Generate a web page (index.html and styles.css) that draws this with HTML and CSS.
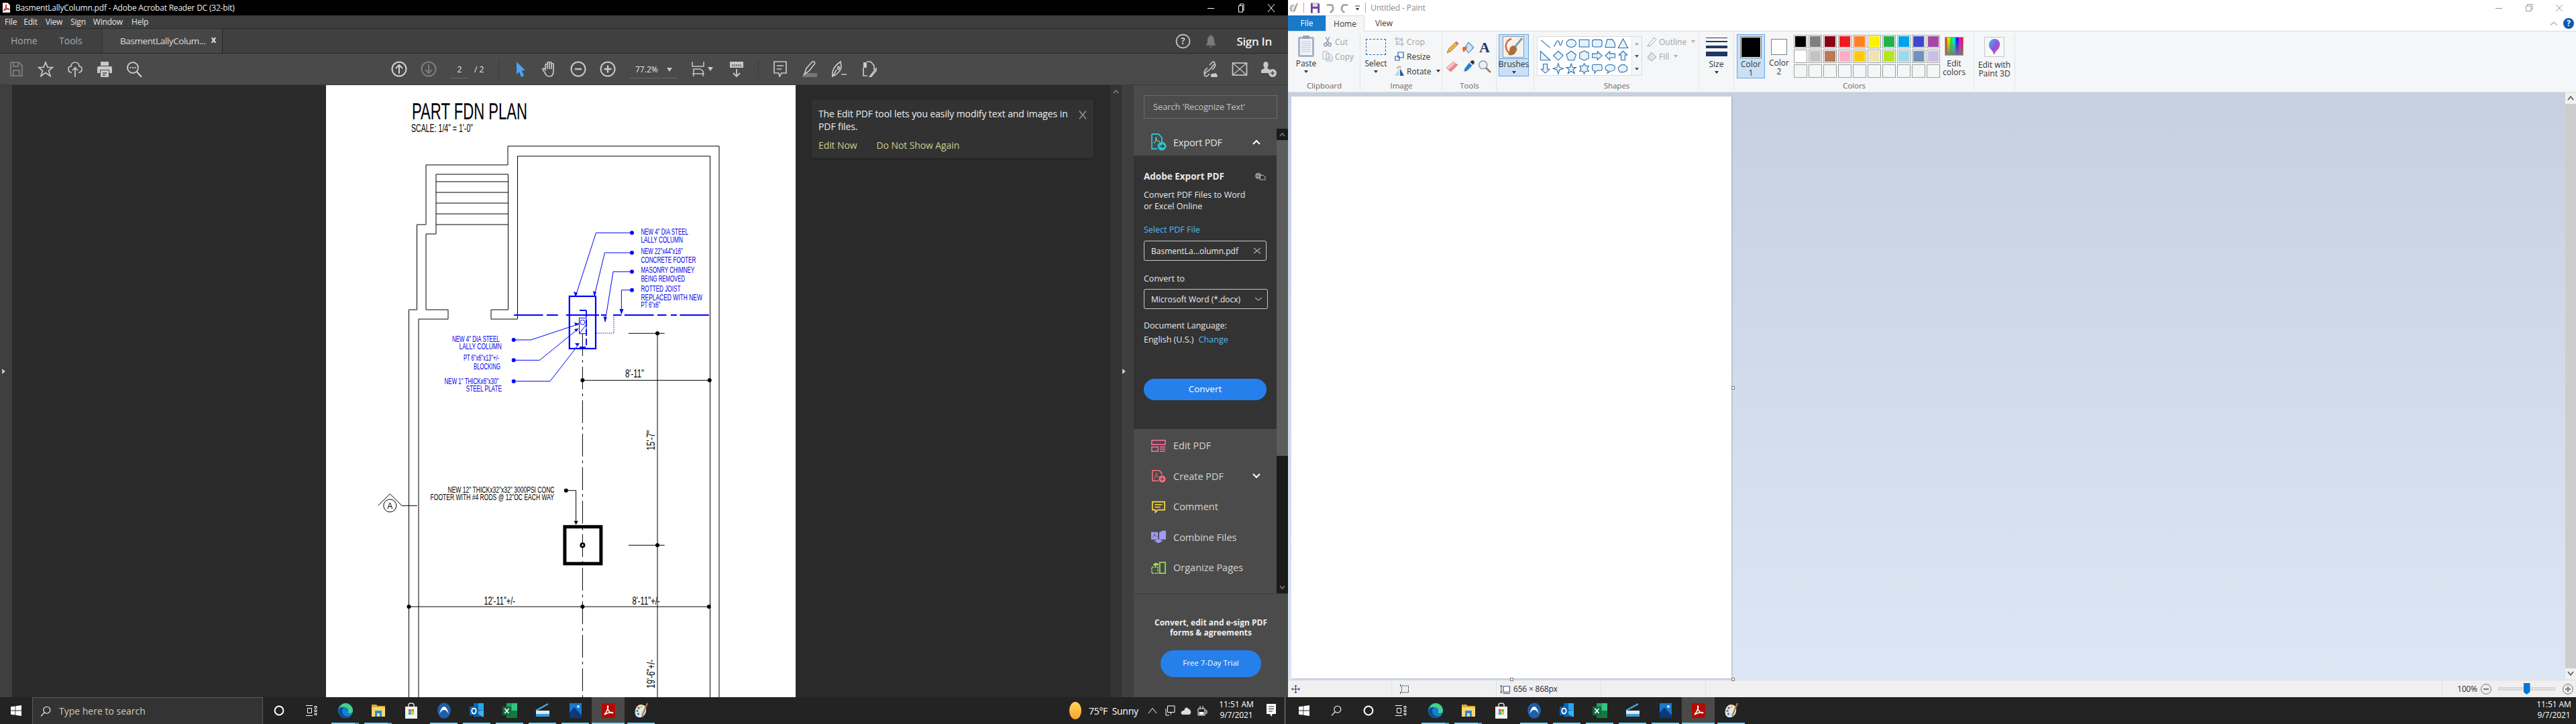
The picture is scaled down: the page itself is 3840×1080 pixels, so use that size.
FILE: index.html
```html
<!DOCTYPE html>
<html lang="en">
<head>
<meta charset="utf-8">
<title>Acrobat and Paint</title>
<link rel="stylesheet" href="styles.css">
</head>
<body>
<svg class="defs" aria-hidden="true">
  <symbol id="i-start" viewBox="0 0 16 16"><path fill="#fff" d="M0 2.3 6.6 1.4V7.6H0ZM7.4 1.3 16 0V7.6H7.4ZM0 8.4H6.6V14.6L0 13.7ZM7.4 8.4H16V16L7.4 14.7Z"/></symbol>
  <symbol id="i-search" viewBox="0 0 16 16"><circle cx="9.8" cy="6.2" r="5" fill="none" stroke="#fff" stroke-width="1.1"/><path d="M6.2 9.8 1 15.4" stroke="#fff" stroke-width="1.2"/></symbol>
  <symbol id="i-cortana" viewBox="0 0 16 16"><circle cx="8" cy="8" r="6.4" fill="none" stroke="#fff" stroke-width="2"/></symbol>
  <symbol id="i-taskview" viewBox="0 0 18 16"><path fill="none" stroke="#fff" d="M1 .5H11M1 15.5H11M3.5 4.5H9.5V11.5H3.5ZM14 1.5H17V4.5H14ZM14 7H17V9.5H14ZM14 12H17V14.5H14Z"/></symbol>
  <symbol id="i-edge" viewBox="0 0 24 24"><circle cx="12" cy="12" r="11" fill="#1480d0"/><path fill="#45d08c" d="M3 8C5 3 9 1 12 1 18 1 23 6 23 12 23 16 18 17 15.5 15 18 11 15 7 11 7 7 7 4 7 3 8Z"/><path fill="#0b4a8e" d="M2 14C2 9 6 6 10 7 6 9 6 16 10 19 13 21 16 21 19 20 13 25 4 22 2 14Z"/></symbol>
  <symbol id="i-folder" viewBox="0 0 24 24"><path fill="#e0a82c" d="M2 3H9L11 5H22V21H2Z"/><path fill="#f8d775" d="M2 7H22V21H2Z"/><path fill="#2a8ad8" d="M7 12H17V21H14V16H10V21H7Z"/></symbol>
  <symbol id="i-store" viewBox="0 0 24 24"><path fill="none" stroke="#ddd" stroke-width="1.5" d="M8 7V3.5C8 2 9 1 12 1S16 2 16 3.5V7"/><rect x="3" y="6" width="18" height="18" fill="#f2f2f2"/><rect x="8" y="10" width="3.7" height="3.7" fill="#f25022"/><rect x="12.3" y="10" width="3.7" height="3.7" fill="#7fba00"/><rect x="8" y="14.3" width="3.7" height="3.7" fill="#00a4ef"/><rect x="12.3" y="14.3" width="3.7" height="3.7" fill="#ffb900"/></symbol>
  <symbol id="i-circle" viewBox="0 0 24 24"><ellipse cx="12" cy="12" rx="10" ry="11.5" fill="#1d5fa8"/><path fill="#fff" d="M5 17C7 9 10 6 12 6S17 9 19 17C16 12 14 11 12 11S8 12 5 17Z"/></symbol>
  <symbol id="i-outlook" viewBox="0 0 24 24"><rect x="7" y="1" width="15" height="20" fill="#0a65b8"/><rect x="14" y="1" width="8" height="10" fill="#28a8ea"/><path fill="#50d9ff" d="M9 14 22 22V11Z" opacity=".7"/><rect x="1" y="6" width="13" height="13" fill="#0f5fa8"/><ellipse cx="7.5" cy="12.5" rx="3.2" ry="4" fill="none" stroke="#fff" stroke-width="1.8"/></symbol>
  <symbol id="i-excel" viewBox="0 0 24 24"><rect x="7" y="1" width="16" height="22" fill="#21a366"/><rect x="15" y="1" width="8" height="11" fill="#33c481"/><rect x="7" y="12" width="16" height="11" fill="#107c41"/><rect x="1" y="6" width="13" height="13" fill="#0e6b38"/><path stroke="#fff" stroke-width="1.8" d="M4.5 9 10.5 16M10.5 9 4.5 16"/></symbol>
  <symbol id="i-scan" viewBox="0 0 24 24"><path stroke="#45a8e0" stroke-width="2.5" d="M2 12 20 2"/><rect x="2" y="12" width="20" height="5" fill="#d8ecf8"/><rect x="2" y="17" width="20" height="4" fill="#3a9bd8"/></symbol>
  <symbol id="i-photos" viewBox="0 0 24 24"><rect x="3" y="1" width="18" height="22" fill="#1b78c8"/><path fill="#0a3a7a" d="M3 23V15L10 7 21 19V23Z"/><circle cx="16" cy="6" r="2" fill="#cfe8ff"/></symbol>
  <symbol id="i-acrobat" viewBox="0 0 24 24"><rect x="2" y="1" width="20" height="22" rx="2.5" fill="#b30b00"/><path fill="none" stroke="#fff" stroke-width="1.6" d="M6 18C9 14 12 8 11.4 5.4 11 3.8 10 6.5 11.5 10.5 13 14 15.5 15.6 18 15.6 19.6 15.6 18 14.2 15 14.8 12 15.3 8 16.6 6 18Z"/></symbol>
  <symbol id="i-paint" viewBox="0 0 24 24"><path fill="#dfe8ee" d="M11 3C17 3 20 7 19 13 18 19 13 23 8 22 3 21 2 16 3 11 4 7 7 3 11 3Z"/><circle cx="8" cy="8" r="1.7" fill="#e84040"/><circle cx="12" cy="6.5" r="1.7" fill="#f0c020"/><circle cx="6" cy="12.5" r="1.7" fill="#30a850"/><circle cx="7.5" cy="17" r="1.7" fill="#3080e0"/><path stroke="#b07a3c" stroke-width="2.2" d="M21 1 13 20"/></symbol>
</svg>

<div class="screen">
  <!-- ============== ACROBAT ============== -->
  <section class="acro">
    <header class="a-title">
      <svg class="a-title-ic" viewBox="0 0 12 16"><path fill="#fff" d="M0 0H8L12 4V16H0Z"/><path fill="none" stroke="#d2161e" stroke-width="1.5" d="M1.5 13C4 10 6.300 6 5.800 3.500 5.400 2.500 4.700 5 6 8 7.200 10.500 9 11 10.500 10.800 11 10 9 9.500 6.500 10.200 4.500 11 2.500 12 1.500 13Z"/></svg>
      <span class="a-title-text">BasmentLallyColumn.pdf - Adobe Acrobat Reader DC (32-bit)</span>
      <div class="winbtns">
        <svg class="winbtn" viewBox="0 0 14 14"><path stroke="#fff" d="M2 7.500H12"/></svg>
        <svg class="winbtn" viewBox="0 0 14 14"><path fill="none" stroke="#fff" d="M3.500 3.500H9.500V13H3.500ZM5.500 3.500V1H11V10.500H9.500"/></svg>
        <svg class="winbtn" viewBox="0 0 14 14"><path stroke="#fff" d="M2 1 12 13M12 1 2 13"/></svg>
      </div>
    </header>
    <nav class="a-menu">
      <span>File</span><span>Edit</span><span>View</span><span>Sign</span><span>Window</span><span>Help</span>
    </nav>
    <div class="a-tabs">
      <div class="a-tab-link a-home">Home</div>
      <div class="a-tab-link a-tools">Tools</div>
      <div class="a-doc-tab"><span>BasmentLallyColum...</span><b>x</b></div>
      <div class="a-tabs-right">
        <svg class="a-help" viewBox="0 0 22 22"><circle cx="11" cy="11" r="9.500" fill="none" stroke="#c8c8c8" stroke-width="1.600"/><text x="11" y="15.500" class="a-help-q">?</text></svg>
        <svg class="a-bell" viewBox="0 0 20 22"><path fill="#7a7a7a" d="M10 1C11 1 11.500 2 11.500 3 15 4 15.500 8 15.500 11 15.500 14 16.500 16 18 17.500V18.500H2V17.500C3.500 16 4.500 14 4.500 11 4.500 8 5 4 8.500 3 8.500 2 9 1 10 1ZM8 19.500H12C12 21 11 21.500 10 21.500S8 21 8 19.500Z"/></svg>
        <span class="a-signin">Sign In</span>
      </div>
    </div>
    <div class="a-toolbar">
      <div class="tb-group tb-left">
        <svg class="tb" viewBox="0 0 24 24"><path fill="none" stroke="#777" stroke-width="2" d="M4 2H16L21 7V22H4ZM8 2V8H15V2M8 22V14H17V22"/></svg>
        <svg class="tb" viewBox="0 0 24 24"><path fill="none" stroke="#c8c8c8" stroke-width="1.700" d="M12 2 15 9.500H22.500L16.500 14.500 19 22.500 12 17.500 5 22.500 7.500 14.500 1.500 9.500H9Z"/></svg>
        <svg class="tb" viewBox="0 0 24 24"><path fill="none" stroke="#c8c8c8" stroke-width="1.700" d="M7 17C3 17 2 14 2 12 2 9 4 8 6 8 6 4 9 2 12 2 15 2 18 4 18 8 20 8 22 9 22 12 22 15 20 17 17 17M12 24V10M8 14 12 10 16 14"/></svg>
        <svg class="tb" viewBox="0 0 24 24"><path fill="#c8c8c8" d="M6 1H18V7H6ZM3 8H21C22 8 23 9 23 10V18H19V13H5V18H1V10C1 9 2 8 3 8ZM6 14H18V24H6Z"/><path stroke="#4a4a4a" stroke-width="1.500" d="M9 18H15M9 21H13"/></svg>
        <svg class="tb" viewBox="0 0 24 24"><circle cx="10" cy="10" r="8" fill="none" stroke="#c8c8c8" stroke-width="2"/><path stroke="#c8c8c8" stroke-width="2.400" d="M16 16 23 24"/><path stroke="#c8c8c8" stroke-width="2" stroke-dasharray="2 1.500" d="M5.500 10H14.500"/></svg>
      </div>
      <div class="tb-group tb-nav">
        <svg class="tb" viewBox="0 0 24 24"><circle cx="12" cy="12" r="10.500" fill="none" stroke="#d0d0d0" stroke-width="2"/><path fill="none" stroke="#d0d0d0" stroke-width="2" d="M12 19V6M7 11 12 6 17 11"/></svg>
        <svg class="tb" viewBox="0 0 24 24"><circle cx="12" cy="12" r="10.500" fill="none" stroke="#7d7d7d" stroke-width="2"/><path fill="none" stroke="#7d7d7d" stroke-width="2" d="M12 5V18M7 13 12 18 17 13"/></svg>
        <div class="page-no"><span class="page-cur">2</span><span class="page-tot">/ 2</span></div>
        <i class="tb-sep"></i>
        <svg class="tb" viewBox="0 0 24 24"><path fill="#4aa3f5" d="M6 1 19 14H14L17 22 13 24 10 16 6 20Z"/></svg>
        <svg class="tb tb-m19" viewBox="0 0 24 24"><path fill="none" stroke="#c8c8c8" stroke-width="1.700" d="M6 13V6C6 4 9 4 9 6V3C9 1 12 1 12 3V3C12 1 15 1 15 3V5C15 3 18 3 18 5V15C18 20 16 23 12 23 8 23 7 21 5 17L2 13C1.500 11 4 10 6 13ZM9 6V12M12 3V12M15 5V12"/></svg>
        <svg class="tb tb-m19" viewBox="0 0 24 24"><circle cx="12" cy="12" r="10.500" fill="none" stroke="#c8c8c8" stroke-width="2"/><path stroke="#c8c8c8" stroke-width="2.400" d="M7 12H17"/></svg>
        <svg class="tb" viewBox="0 0 24 24"><circle cx="12" cy="12" r="10.500" fill="none" stroke="#c8c8c8" stroke-width="2"/><path stroke="#c8c8c8" stroke-width="2.400" d="M6.500 12H17.500M12 6.500V17.500"/></svg>
        <div class="zoom-val"><span>77.2%</span><i class="caret-d"></i></div>
        <svg class="tb tb-fit" viewBox="0 0 20 24"><path fill="none" stroke="#c8c8c8" stroke-width="1.500" d="M1 1V8H18V1M3 23V12H13L17 15V23M1 19H19M6 19 2 19M14 19 18 19"/></svg>
        <i class="caret-d caret-fit"></i>
        <svg class="tb tb-ruler" viewBox="0 0 24 24"><rect x="2" y="1" width="20" height="9" fill="#c8c8c8"/><path stroke="#4a4a4a" stroke-width="1.200" d="M6 5V8M9 5V8M12 5V8M15 5V8M18 5V8"/><path fill="none" stroke="#c8c8c8" stroke-width="1.800" d="M12 12V23M7 18 12 23 17 18"/></svg>
        <i class="tb-sep tb-sep2"></i>
        <svg class="tb" viewBox="0 0 24 24"><path fill="none" stroke="#c8c8c8" stroke-width="1.700" d="M3 1H21V18H14L11 23 10 18H3ZM7 7H17M7 12H14"/></svg>
        <svg class="tb" viewBox="0 0 24 24"><path fill="#777" d="M3 18H23V24H1Z"/><path fill="none" stroke="#c8c8c8" stroke-width="1.700" d="M4 20 7 11 16 1C18 0 20 1.500 19.500 4L11 15Z"/></svg>
        <svg class="tb" viewBox="0 0 24 24"><path fill="none" stroke="#c8c8c8" stroke-width="1.700" d="M2 23C1 17 3 10 10 4L14 1 15 8C15 13 10 20 2 23ZM8 13 3 22M12 8C10 8 9 10 10 12S13 11 12 8M15 20H23"/></svg>
        <svg class="tb" viewBox="0 0 24 24"><path fill="#c8c8c8" d="M4 2H9V10H4Z"/><path fill="none" stroke="#c8c8c8" stroke-width="1.700" d="M9 1H15L20 7V13M4 10V22H10M13 24 23 11 25 12 15 24 12 25Z"/></svg>
      </div>
      <div class="tb-group tb-right">
        <svg class="tb" viewBox="0 0 24 24"><path fill="none" stroke="#c8c8c8" stroke-width="1.700" d="M9 14 4 19C2 22 6 24 8 22L11 19M14 9 18 5C20 2 17 0 15 2L11 6M8 10 5 13C3 16 2 18 4 20M15 13 18 10C20 7 20 5 18 3M9 15 15 9"/><path fill="#c8c8c8" d="M13 23C12 20 15 18 17 19 19 17 23 19 22 21 24 22 23 24 21 24H14Z"/></svg>
        <svg class="tb" viewBox="0 0 24 24"><rect x="1.500" y="3" width="21" height="18" fill="none" stroke="#c8c8c8" stroke-width="1.700"/><path fill="none" stroke="#c8c8c8" stroke-width="1.300" d="M2 3.500 12 12 22 3.500M2 20.500 12 12 22 20.500"/></svg>
        <svg class="tb" viewBox="0 0 24 24"><path fill="#c8c8c8" d="M7 1C10 1 11 4 10.500 7 10 9 9 10 9 11 11 12 14 12.500 14 15V18H0V15C0 12.500 3 12 5 11 5 10 4 9 3.500 7 3 4 4 1 7 1Z"/><circle cx="17" cy="18" r="6" fill="#c8c8c8"/><path stroke="#4a4a4a" stroke-width="1.500" d="M14 18H20M17 15V21"/></svg>
      </div>
    </div>

    <main class="a-main">
      <aside class="rail"><i class="tri-r"></i></aside>
      <div class="dark dark-l"></div>
      <div class="page">
        <svg class="plan" viewBox="486 127 700 913">
          <g class="ln">
            <path d="M609.500 1040V462H621.500V335H635V246H757V218H1072V1040"/>
            <path d="M1058.500 1040V233H771.500V476H732V462H757.500V260H650V349H635V462H668V476H624V1040"/>
            <path d="M650 271H757M650 287H757M650 303H757M650 319H757M650 335H757"/>
            <path d="M980 497V1040M937 497.300H990.700M868.400 567.300H1057.700M609.500 905H1056.800M937 813.300H990.700M599 754.300H622"/>
            <path class="ctr" d="M868.400 497V1040"/>
            <path d="M843.800 731.700H858.600V782"/>
            <path d="M563.500 754.300 581.300 736.700 599 754.300"/>
            <circle cx="581.300" cy="754.300" r="9.500" class="wfill"/>
          </g>
          <g class="blk">
            <circle cx="980" cy="497.300" r="3"/><circle cx="868.400" cy="567.300" r="3"/><circle cx="1057.700" cy="567.300" r="3"/>
            <circle cx="609.500" cy="905" r="3"/><circle cx="868.400" cy="905" r="3"/><circle cx="1056.800" cy="905" r="3"/>
            <circle cx="980" cy="813.300" r="3"/><circle cx="843.800" cy="731.700" r="3"/>
            <path d="M855.600 777H861.600L858.600 783Z"/>
          </g>
          <rect x="841.900" y="785.800" width="54" height="55" class="foot"/>
          <circle cx="868.400" cy="813.300" r="4"/><circle cx="868.400" cy="813.300" r="1.300" class="wdot"/>
          <g class="bl">
            <path d="M942 347.300H888.500L858 441.700M942 377H901.400L886 441.700M942 405.300H914L902 480M942 432.700H926.400V468"/>
            <path d="M765.700 507H791.600L863 483.300M765.700 537.300H804.500L861.700 490.700M765.700 568.700H820L863 513.300"/>
            <path class="thick" d="M766.200 470H809.500M814.800 470H831.800M843.800 470H893M896 470H904M914 470H926.400M930.900 470H974.600M980 470H993.400M1000 470H1009M1013.500 470H1056.800"/>
            <rect x="848.800" y="442" width="39.200" height="78" class="thick"/>
            <rect x="863.500" y="474.300" width="10.500" height="23.400"/>
            <circle cx="868.400" cy="480.700" r="3.500"/>
            <path d="M864 497 874 484"/>
            <path class="dsh" d="M874 463H860M874 463V518H864"/>
            <path class="dot" d="M889.400 497H915V470"/>
          </g>
          <g class="blf">
            <circle cx="942" cy="347.300" r="3"/><circle cx="942" cy="377" r="3"/><circle cx="942" cy="405.300" r="3"/><circle cx="942" cy="432.700" r="3"/>
            <circle cx="765.700" cy="507" r="3"/><circle cx="765.700" cy="537.300" r="3"/><circle cx="765.700" cy="568.700" r="3"/>
            <path d="M855 435 861 437 858 443ZM884 434 889 436 886 443ZM899.500 472 904.500 473 902 481ZM923.500 461H929.500L926.400 469ZM864 483 856 481 858 486ZM862.500 490 856 491 859 495ZM864 512 857 512 860 516Z"/>
          </g>
          <text x="614" y="178" class="t-title" textLength="172" lengthAdjust="spacingAndGlyphs">PART FDN PLAN</text>
          <text x="613" y="197" class="t-16" textLength="92" lengthAdjust="spacingAndGlyphs">SCALE: 1/4" = 1'-0"</text>
          <g class="t-blue">
            <text x="955.400" y="350" textLength="70.600" lengthAdjust="spacingAndGlyphs">NEW 4" DIA STEEL</text>
            <text x="955.400" y="361.700" textLength="62.500" lengthAdjust="spacingAndGlyphs">LALLY COLUMN</text>
            <text x="955.400" y="379" textLength="62.500" lengthAdjust="spacingAndGlyphs">NEW 22"x44"x16"</text>
            <text x="955.400" y="391.700" textLength="82" lengthAdjust="spacingAndGlyphs">CONCRETE  FOOTER</text>
            <text x="955.400" y="407" textLength="80" lengthAdjust="spacingAndGlyphs">MASONRY  CHIMNEY</text>
            <text x="955.400" y="420" textLength="65.600" lengthAdjust="spacingAndGlyphs">BEING  REMOVED</text>
            <text x="955.400" y="435" textLength="59" lengthAdjust="spacingAndGlyphs">ROTTED  JOIST</text>
            <text x="955.400" y="447.700" textLength="91.500" lengthAdjust="spacingAndGlyphs">REPLACED  WITH  NEW</text>
            <text x="955.400" y="459" textLength="29" lengthAdjust="spacingAndGlyphs">PT 6"x6"</text>
            <text x="674" y="510" textLength="70.700" lengthAdjust="spacingAndGlyphs">NEW 4" DIA STEEL</text>
            <text x="684.500" y="520.700" textLength="63.400" lengthAdjust="spacingAndGlyphs">LALLY COLUMN</text>
            <text x="691" y="538" textLength="53" lengthAdjust="spacingAndGlyphs">PT 6"x6"x13"+/-</text>
            <text x="706" y="550.700" textLength="40" lengthAdjust="spacingAndGlyphs">BLOCKING</text>
            <text x="662.600" y="572.700" textLength="80.800" lengthAdjust="spacingAndGlyphs">NEW 1" THICKx6"x30"</text>
            <text x="694.700" y="584" textLength="53.200" lengthAdjust="spacingAndGlyphs">STEEL  PLATE</text>
          </g>
          <g class="t-blk">
            <text x="667.500" y="735" textLength="159" lengthAdjust="spacingAndGlyphs">NEW 12" THICKx32"x32"  3000PSI  CONC</text>
            <text x="641.600" y="746" textLength="184.400" lengthAdjust="spacingAndGlyphs">FOOTER WITH  #4 RODS @ 12"OC  EACH  WAY</text>
            <text x="577.300" y="759.300">A</text>
          </g>
          <text x="932" y="562.700" class="t-16" textLength="28" lengthAdjust="spacingAndGlyphs">8'-11"</text>
          <text x="721.500" y="901.700" class="t-16" textLength="46.500" lengthAdjust="spacingAndGlyphs">12'-11"+/-</text>
          <text x="942.500" y="901.700" class="t-16" textLength="41" lengthAdjust="spacingAndGlyphs">8'-11"+/-</text>
          <text transform="translate(976.400 671.700) rotate(-90)" class="t-16" textLength="30" lengthAdjust="spacingAndGlyphs">15'-7"</text>
          <text transform="translate(976.400 1026.700) rotate(-90)" class="t-16" textLength="42.700" lengthAdjust="spacingAndGlyphs">19'-6"+/-</text>
        </svg>
      </div>
      <div class="dark dark-r">
        <div class="notice">
          <div class="notice-top">
            <p>The Edit PDF tool lets you easily modify text and images in PDF files.</p>
            <svg class="notice-x" viewBox="0 0 12 14"><path stroke="#8c8c8c" stroke-width="1.800" d="M1 1 11 13M11 1 1 13"/></svg>
          </div>
          <div class="notice-links"><span>Edit Now</span><span>Do Not Show Again</span></div>
        </div>
      </div>
      <div class="doc-scroll"><svg class="chev-s" viewBox="0 0 10 8"><path fill="none" stroke="#888" stroke-width="1.600" d="M1 7 5 2 9 7"/></svg></div>
      <div class="rail rail-r"><i class="tri-r tri-small"></i></div>
      <aside class="panel">
        <div class="p-search"><div class="p-search-box">Search 'Recognize Text'</div></div>
        <div class="p-scroll">
          <div class="p-content">
            <div class="p-head">
              <svg class="p-head-ic" viewBox="0 0 24 26"><path fill="none" stroke="#2bc3cf" stroke-width="1.800" d="M2 1H12L17 6V13M2 1V23H10"/><path fill="none" stroke="#8fd" stroke-width="1" d="M5 15C8 12 9 8 8.500 6 8 5 7.500 8 9 10 10.500 12 13 12 14 12"/><circle cx="17" cy="19" r="6.500" fill="#2bc3cf"/><path stroke="#333" stroke-width="1.400" d="M13.500 19H20M17.500 16.500 20 19 17.500 21.500" fill="none"/></svg>
              <span class="p-head-t">Export PDF</span>
              <svg class="chev-m" viewBox="0 0 12 8"><path fill="none" stroke="#fff" stroke-width="2" d="M1 7 6 2 11 7"/></svg>
            </div>
            <div class="p-export">
              <div class="p-ex-title"><b>Adobe Export PDF</b>
                <svg class="p-ex-ic" viewBox="0 0 18 12"><circle cx="6" cy="5.500" r="5" fill="#9a9a9a"/><path fill="none" stroke="#444" stroke-width=".7" d="M1 5.500H11M6 .5V10.500"/><path fill="#333" stroke="#bdbdbd" d="M9 4.500H14L17 7V11.500H9Z"/></svg>
              </div>
              <p class="p-ex-desc">Convert PDF Files to Word<br>or Excel Online</p>
              <div class="p-ex-label p-blue">Select PDF File</div>
              <div class="p-field"><span>BasmentLa...olumn.pdf</span><svg class="p-field-x" viewBox="0 0 12 12"><path stroke="#aaa" stroke-width="1.300" d="M1 2 11 10M11 2 1 10"/></svg></div>
              <div class="p-ex-label p-conv">Convert to</div>
              <div class="p-field p-select"><span>Microsoft Word (*.docx)</span><svg class="p-field-x" viewBox="0 0 12 12"><path fill="none" stroke="#aaa" stroke-width="1.300" d="M1 4 6 8 11 4"/></svg></div>
              <div class="p-lang">Document Language:</div>
              <div class="p-lang2">English (U.S.) <span class="p-blue">Change</span></div>
              <div class="p-convert">Convert</div>
            </div>
            <ul class="p-list">
              <li><svg viewBox="0 0 24 20"><path fill="none" stroke="#ff6fa5" stroke-width="1.600" d="M1 1H23V8H1ZM1 12H11V19H1ZM14 12H23M14 15.500H23M14 19H23"/></svg><span>Edit PDF</span></li>
              <li class="has-chev"><svg viewBox="0 0 24 20"><path fill="none" stroke="#ff6f7c" stroke-width="1.600" d="M2 1H13L17 5V8M2 1V18H12"/><path fill="none" stroke="#ff6f7c" d="M4 15C7 12 9 8 8.500 5 8 4 7.500 7 9 10 10 11.500 12 12 14 11.500"/><circle cx="18" cy="15" r="5.500" fill="#ff6f7c"/><path stroke="#4b4b4b" stroke-width="1.500" d="M15 15H21M18 12V18"/></svg><span>Create PDF</span><svg class="li-chev" viewBox="0 0 12 8"><path fill="none" stroke="#fff" stroke-width="2" d="M1 1 6 6 11 1"/></svg></li>
              <li><svg viewBox="0 0 24 20"><path fill="none" stroke="#ffd83a" stroke-width="1.800" d="M2 2H22V15H11L7 19V15H2ZM6 6.500H18M6 10.500H15"/></svg><span>Comment</span></li>
              <li><svg viewBox="0 0 24 20"><path fill="#a49bf5" d="M0 2H11V14H0ZM13 3 18 0H24V14H13Z"/><path fill="#a49bf5" d="M8 14H16V16H20L12 20 4 16H8Z"/><path fill="none" stroke="#4b4b4b" d="M2 11C4 9 6 6 5.500 4.500 5 4 5 6 6.500 8 7.500 9 9 9 10 9"/></svg><span>Combine Files</span></li>
              <li><svg viewBox="0 0 24 20"><path fill="none" stroke="#a5e85a" stroke-width="1.700" stroke-dasharray="3 1.500" d="M1 9H11V19H1Z"/><path fill="none" stroke="#a5e85a" stroke-width="1.700" d="M14 1H23V19H14Z"/><path fill="#a5e85a" d="M3 5 8 1V3H12V6H8V8Z"/></svg><span>Organize Pages</span></li>
              <li><svg viewBox="0 0 24 20"><circle cx="12" cy="10" r="8" fill="#2bc3cf"/></svg><span></span></li>
            </ul>
          </div>
          <div class="p-bar">
            <svg class="p-bar-up" viewBox="0 0 10 8"><path fill="none" stroke="#888" stroke-width="1.600" d="M1 7 5 2 9 7"/></svg>
            <div class="p-thumb"></div>
            <svg class="p-bar-down" viewBox="0 0 10 8"><path fill="none" stroke="#888" stroke-width="1.600" d="M1 1 5 6 9 1"/></svg>
          </div>
        </div>
        <footer class="p-foot">
          <p>Convert, edit and e-sign PDF<br>forms &amp; agreements</p>
          <div class="p-trial">Free 7-Day Trial</div>
        </footer>
      </aside>
    </main>
  </section>

  <!-- ============== PAINT ============== -->
  <section class="paint">
    <header class="m-title">
      <svg class="m-app" viewBox="0 0 24 24"><use href="#i-paint"/></svg>
      <i class="m-div"></i>
      <svg class="m-qa" viewBox="0 0 16 16"><path fill="#6b3fa0" d="M1 0H13L15 2V16H1Z"/><rect x="4" y="0" width="8" height="6" fill="#ddd"/><rect x="4" y="9" width="8" height="7" fill="#fff"/></svg>
      <svg class="m-qa" viewBox="0 0 16 16"><path fill="none" stroke="#a8a8a8" stroke-width="3" d="M3 3 11 3C15 8 13 13 8 15"/></svg>
      <svg class="m-qa" viewBox="0 0 16 16"><path fill="none" stroke="#a8a8a8" stroke-width="3" d="M13 3 6 3C1 8 3 13 8 15"/></svg>
      <svg class="m-qd" viewBox="0 0 8 10"><path d="M0 1H8V2H0ZM1 5H7L4 9Z" fill="#333"/></svg>
      <i class="m-div m-div2"></i>
      <span class="m-name">Untitled - Paint</span>
      <div class="winbtns winbtns-m">
        <svg class="winbtn" viewBox="0 0 14 14"><path stroke="#999" d="M2 7.500H12"/></svg>
        <svg class="winbtn" viewBox="0 0 14 14"><path fill="none" stroke="#999" d="M2.500 4H10V11.500H2.500ZM4.500 4V1.500H12V9H10"/></svg>
        <svg class="winbtn" viewBox="0 0 14 14"><path stroke="#999" d="M2 2 12 12M12 2 2 12"/></svg>
      </div>
    </header>
    <nav class="m-tabs">
      <div class="m-file">File</div>
      <div class="m-home">Home</div>
      <div class="m-view">View</div>
      <div class="m-tabs-right">
        <svg class="m-up" viewBox="0 0 12 8"><path fill="none" stroke="#aaa" stroke-width="1.300" d="M1 6.500 6 2 11 6.500"/></svg>
        <svg class="m-help" viewBox="0 0 16 16"><circle cx="8" cy="8" r="8" fill="#0a5cb0"/><text x="8" y="12" class="m-help-q">?</text></svg>
      </div>
    </nav>
    <div class="ribbon">
      <div class="grp g-clip">
        <div class="grp-body">
          <div class="big b-paste">
            <svg class="big-ic" viewBox="0 0 26 34"><rect x="1" y="3" width="24" height="30" rx="2" fill="#a7b4c6"/><rect x="4" y="6" width="18" height="24" fill="#f1f5fa"/><path stroke="#b7c4d6" d="M6 10H20M6 13H20M6 16H20M6 19H20M6 22H20M6 25H20"/><rect x="8" y="1" width="10" height="5" rx="1" fill="#98a3b2"/></svg>
            <span>Paste</span><i class="caret"></i>
          </div>
          <div class="smalls s-clip">
            <div class="small off"><svg viewBox="0 0 16 16"><path fill="none" stroke="#8d99a8" stroke-width="1.400" d="M5 1 10 10M11 1 6 10"/><circle cx="5" cy="12.500" r="2.300" fill="none" stroke="#8d99a8" stroke-width="1.400"/><circle cx="11" cy="12.500" r="2.300" fill="none" stroke="#8d99a8" stroke-width="1.400"/></svg><span>Cut</span></div>
            <div class="small off"><svg viewBox="0 0 16 16"><path fill="#f3f5f8" stroke="#a9b3c0" d="M1 1H7L10 4V12H1ZM6 4H11L15 8V15H6Z"/><path stroke="#c5ccd6" d="M8 9H13M8 11H13M8 13H13"/></svg><span>Copy</span></div>
          </div>
        </div>
        <div class="grp-label">Clipboard</div>
      </div>
      <div class="grp g-img">
        <div class="grp-body">
          <div class="big b-select">
            <div class="big-ic sel-box"></div>
            <span>Select</span><i class="caret"></i>
          </div>
          <div class="smalls s-img">
            <div class="small off"><svg viewBox="0 0 16 16"><path fill="none" stroke="#8fa6bd" d="M4 1V12H15M1 4H12V15M3 13 13 3"/></svg><span>Crop</span></div>
            <div class="small"><svg viewBox="0 0 16 16"><path fill="#fff" stroke="#1c5fa8" stroke-width="1.200" d="M6 2H14V10H6ZM2 8H8V14H2Z"/></svg><span>Resize</span></div>
            <div class="small"><svg viewBox="0 0 16 16"><path fill="#1c5fa8" d="M9 4 15 15H9Z"/><path fill="#c8d4e2" d="M8 4V15H1Z"/><path fill="none" stroke="#e0682a" stroke-width="1.200" d="M4 4C6 1 8 1 11 2"/></svg><span>Rotate</span><i class="caret caret-in"></i></div>
          </div>
        </div>
        <div class="grp-label">Image</div>
      </div>
      <div class="grp g-tools">
        <div class="grp-body">
          <div class="tool-grid">
            <svg viewBox="0 0 18 18"><path fill="#f0b840" stroke="#7a5a20" stroke-width=".7" d="M4 11 13 2 16 5 7 14 2 16Z"/><path fill="#e06060" d="M13 2 14.500 .5 17.500 3.500 16 5Z"/></svg>
            <svg viewBox="0 0 18 18"><path fill="#cfe6f6" stroke="#4a86b8" d="M9 2 16 9 9 16 4 10Z"/><path fill="#e8682a" d="M1 9C3 7 5 8 8 9L5 12 3 15C1 14 1 11 1 9Z"/></svg>
            <span class="tool-a">A</span>
            <svg viewBox="0 0 18 18"><path fill="#ee8a92" stroke="#b85a62" stroke-width=".7" d="M1 11 10 3 16 7 7 16Z"/><path fill="#f8c5c8" d="M1 11 10 3 13 5 4 13Z"/></svg>
            <svg viewBox="0 0 18 18"><path fill="#2a80c8" d="M10 4 14 8 7 15 3 16 4 12Z"/><path fill="#334" d="M11 3 14 1C16 1 17 2 17 4L15 7Z"/></svg>
            <svg viewBox="0 0 18 18"><circle cx="7" cy="7" r="5.500" fill="#e4eff8" stroke="#8c99a6" stroke-width="1.300"/><path stroke="#9c7a48" stroke-width="2.400" d="M11 11 17 17"/></svg>
          </div>
        </div>
        <div class="grp-label">Tools</div>
      </div>
      <div class="grp g-brush">
        <div class="grp-body">
          <div class="brush-btn">
            <div class="brush-top">
              <svg class="brush-ic" viewBox="0 0 32 32"><rect x=".5" y=".5" width="31" height="31" fill="#f2f2f2" stroke="#9a9a9a"/><path fill="none" stroke="#e8602a" stroke-width="2.400" d="M13 4C6 6 3 13 6 20 9 27 16 28 18 24"/><path fill="#a8703c" d="M10 22C10 17 14 12 19 15 24 18 20 25 15 28 10 29 7 28 9 26 10 25 10 24 10 22Z"/><path stroke="#8c9aaa" stroke-width="3" d="M19 15 29 3"/></svg>
            </div>
            <div class="brush-lab"><span>Brushes</span><i class="caret"></i></div>
          </div>
        </div>
      </div>
      <div class="grp g-shapes">
        <div class="grp-body">
          <div class="gallery">
            <svg class="gal-svg" viewBox="0 0 140 59">
              <g class="shp">
                <path d="M3 4 17 16" transform="translate(0 1)"/>
                <path transform="translate(20 1)" d="M2 14C5 14 6 4 9 5S11 13 13 12 15 6 17 4"/>
                <ellipse transform="translate(40 1)" cx="9.500" cy="9" rx="7.500" ry="6"/>
                <rect transform="translate(60 1)" x="2" y="3.500" width="15" height="11"/>
                <rect transform="translate(80 1)" x="2" y="3.500" width="15" height="11" rx="3"/>
                <path transform="translate(100 1)" d="M2 15 5 3H13L17 9V15Z"/>
                <path transform="translate(120 1)" d="M9.500 2 17 16H2Z"/>
                <path transform="translate(0 20)" d="M2 2V16H17Z"/>
                <path transform="translate(20 20)" d="M9.500 2 17 9 9.500 16 2 9Z"/>
                <path transform="translate(40 20)" d="M9.500 2 17 7.500 14 16H5L2 7.500Z"/>
                <path transform="translate(60 20)" d="M9.500 1.500 16.500 5V13L9.500 16.500 2.500 13V5Z"/>
                <path transform="translate(80 20)" d="M2 6H10V2.500L17 9 10 15.500V12H2Z"/>
                <path transform="translate(100 20)" d="M17 6H9V2.500L2 9 9 15.500V12H17Z"/>
                <path transform="translate(120 20)" d="M6.500 16V8H3L9.500 2 16 8H12.500V16Z"/>
                <path transform="translate(0 40)" d="M6.500 2V10H3L9.500 16 16 10H12.500V2Z"/>
                <path transform="translate(20 40)" d="M9.500 1 11.500 7 17.500 9 11.500 11 9.500 17 7.500 11 1.500 9 7.500 7Z"/>
                <path transform="translate(40 40)" d="M9.500 1.500 11.500 7H17L12.500 10.500 14.500 16.500 9.500 13 4.500 16.500 6.500 10.500 2 7H7.500Z"/>
                <path transform="translate(60 40)" d="M9.500 1 11.500 5H16.500L14 9 16.500 13H11.500L9.500 17 7.500 13H2.500L5 9 2.500 5H7.500Z"/>
                <path transform="translate(80 40)" d="M4 3H15Q17 3 17 5V10Q17 12 15 12H9L5.500 16V12H4Q2 12 2 10V5Q2 3 4 3Z"/>
                <path transform="translate(100 40)" d="M9.500 3C14 3 17 5 17 8S14 13 9.500 13L5.500 16 6.500 12.500C4 12 2 10 2 8 2 5 5 3 9.500 3Z"/>
                <path transform="translate(120 40)" d="M5 5Q6 2 9 3.500 12 1.500 13.500 5 17 6 15.500 9.500 16.500 13 13 13 11 15.500 8 14 4 15.500 3.500 12 .5 9.500 3 7 3 5 5 5Z"/>
              </g>
            </svg>
            <div class="gal-scroll"><i class="gs gs-up"></i><i class="gs gs-dn"></i><i class="gs gs-more"></i></div>
          </div>
          <div class="smalls s-shapes">
            <div class="small off"><svg viewBox="0 0 16 16"><path fill="#fff" stroke="#9a9fa6" d="M3 13 12 2 15 5 6 14 2 15Z"/></svg><span>Outline</span><i class="caret caret-in caret-g"></i></div>
            <div class="small off"><svg viewBox="0 0 16 16"><path fill="#dbe6f0" stroke="#9a9fa6" d="M8 2 15 9 8 15 2 10Z"/></svg><span>Fill</span><i class="caret caret-in caret-g"></i></div>
          </div>
        </div>
        <div class="grp-label">Shapes</div>
      </div>
      <div class="grp g-size">
        <div class="grp-body">
          <div class="big b-size">
            <div class="big-ic size-lines"><i></i><i></i><i></i><i></i></div>
            <span>Size</span><i class="caret"></i>
          </div>
        </div>
      </div>
      <div class="grp g-colors">
        <div class="grp-body">
          <div class="color-btn active"><div class="color-sw c1"><i></i></div><span>Color<br>1</span></div>
          <div class="color-btn c2-btn"><div class="color-sw c2"><i></i></div><span>Color<br>2</span></div>
          <div class="palette">
            <i class="p0"></i><i class="p1"></i><i class="p2"></i><i class="p3"></i><i class="p4"></i><i class="p5"></i><i class="p6"></i><i class="p7"></i><i class="p8"></i><i class="p9"></i>
            <i class="q0"></i><i class="q1"></i><i class="q2"></i><i class="q3"></i><i class="q4"></i><i class="q5"></i><i class="q6"></i><i class="q7"></i><i class="q8"></i><i class="q9"></i>
            <i class="e"></i><i class="e"></i><i class="e"></i><i class="e"></i><i class="e"></i><i class="e"></i><i class="e"></i><i class="e"></i><i class="e"></i><i class="e"></i>
          </div>
          <div class="big b-edit"><div class="big-ic edit-sw"></div><span>Edit<br>colors</span></div>
        </div>
        <div class="grp-label">Colors</div>
      </div>
      <div class="grp g-3d">
        <div class="grp-body">
          <div class="big b-3d">
            <svg class="big-ic" viewBox="0 0 30 30"><rect x=".5" y=".5" width="29" height="29" fill="#f8f8f8" stroke="#c8c8c8"/><defs><linearGradient id="g3d" x1="0" y1="0" x2="1" y2="1"><stop offset="0" stop-color="#35c6e8"/><stop offset=".5" stop-color="#8a58e0"/><stop offset="1" stop-color="#f8487a"/></linearGradient></defs><path fill="url(#g3d)" d="M15 3C21 3 24 8 23 13 22 18 19 20 17 22 16 24 15 26 14 26 13 24 13 22 11 20 8 17 6 14 7 10 8 6 11 3 15 3Z"/></svg>
            <span>Edit with<br>Paint 3D</span>
          </div>
        </div>
      </div>
    </div>
    <div class="m-work">
      <div class="m-area">
        <div class="canvas"></div>
        <i class="hd hd-r"></i><i class="hd hd-b"></i><i class="hd hd-c"></i>
      </div>
      <div class="m-bar">
        <svg class="m-bar-ch" viewBox="0 0 10 8"><path fill="none" stroke="#555" stroke-width="1.600" d="M1 7 5 2 9 7"/></svg>
        <div class="m-thumb"></div>
        <svg class="m-bar-ch" viewBox="0 0 10 8"><path fill="none" stroke="#555" stroke-width="1.600" d="M1 1 5 6 9 1"/></svg>
      </div>
    </div>
    <div class="m-status">
      <div class="st st-1"><svg viewBox="0 0 14 14"><path fill="none" stroke="#1b3f6b" d="M7 1V13M1 7H13M5 3 7 1 9 3M5 11 7 13 9 11M3 5 1 7 3 9M11 5 13 7 11 9"/></svg></div>
      <div class="st st-2"><svg viewBox="0 0 14 14"><path fill="none" stroke="#1b3f6b" stroke-dasharray="2 1" d="M3 2H13V12H3Z"/><path fill="none" stroke="#1b3f6b" d="M1 0V3M1 11V14"/></svg></div>
      <div class="st st-3"><svg viewBox="0 0 16 14"><rect x="5.500" y="2.500" width="10" height="9" fill="#fff" stroke="#1b3f6b"/><path fill="none" stroke="#1b3f6b" d="M2 1V13M0 3 2 1 4 3M0 11 2 13 4 11M5 14H16"/></svg><span>656 × 868px</span></div>
      <div class="st st-4"></div>
      <div class="st st-5"></div>
      <div class="st-zoom">
        <span class="z-pct">100%</span>
        <svg class="z-btn" viewBox="0 0 16 16"><circle cx="8" cy="8" r="7.500" fill="#ececec" stroke="#777"/><path stroke="#777" stroke-width="2" d="M4 8H12"/></svg>
        <div class="z-track"><i class="z-thumb"></i></div>
        <svg class="z-btn z-plus" viewBox="0 0 16 16"><circle cx="8" cy="8" r="7.500" fill="#ececec" stroke="#777"/><path stroke="#777" stroke-width="2" d="M4 8H12M8 4V12"/></svg>
      </div>
    </div>
  </section>

  <!-- ============== TASKBARS ============== -->
  <footer class="taskbar tb-a">
    <div class="tk tk-start"><svg class="tk-16" viewBox="0 0 16 16"><use href="#i-start"/></svg></div>
    <div class="tk-searchbox"><svg class="tk-s" viewBox="0 0 16 16"><use href="#i-search"/></svg><span>Type here to search</span></div>
    <div class="tk tk-start"><svg class="tk-16" viewBox="0 0 16 16"><use href="#i-cortana"/></svg></div>
    <div class="tk tk-start"><svg class="tk-tv" viewBox="0 0 18 16"><use href="#i-taskview"/></svg></div>
    <div class="apps apps-a">
      <div class="app open stack"><svg viewBox="0 0 24 24"><use href="#i-edge"/></svg></div>
      <div class="app open stack"><svg viewBox="0 0 24 24"><use href="#i-folder"/></svg></div>
      <div class="app"><svg viewBox="0 0 24 24"><use href="#i-store"/></svg></div>
      <div class="app open"><svg viewBox="0 0 24 24"><use href="#i-circle"/></svg></div>
      <div class="app open"><svg viewBox="0 0 24 24"><use href="#i-outlook"/></svg></div>
      <div class="app open"><svg viewBox="0 0 24 24"><use href="#i-excel"/></svg></div>
      <div class="app open"><svg viewBox="0 0 24 24"><use href="#i-scan"/></svg></div>
      <div class="app open"><svg viewBox="0 0 24 24"><use href="#i-photos"/></svg></div>
      <div class="app open cur"><svg viewBox="0 0 24 24"><use href="#i-acrobat"/></svg></div>
      <div class="app open"><svg viewBox="0 0 24 24"><use href="#i-paint"/></svg></div>
    </div>
    <div class="tray">
      <svg class="tr-sun" viewBox="0 0 18 26"><defs><linearGradient id="sun" x1="0" y1="0" x2="0" y2="1"><stop offset="0" stop-color="#ffd65a"/><stop offset="1" stop-color="#f7a528"/></linearGradient></defs><ellipse cx="9" cy="13" rx="9" ry="13" fill="url(#sun)"/></svg>
      <span class="tr-weather">75°F&nbsp; Sunny</span>
      <svg class="tr-ic tr-up" viewBox="0 0 14 10"><path fill="none" stroke="#fff" d="M1 9 7 1.500 13 9"/></svg>
      <svg class="tr-ic" viewBox="0 0 16 16"><path fill="none" stroke="#fff" d="M4.500 1H15V10.500H4.500ZM2 5V15H7M9.500 10.500V14"/></svg>
      <svg class="tr-ic" viewBox="0 0 16 16"><path fill="#ddd" d="M4 14C1 14 0 12 1 10 2 8 4 8 5 8 6 4 9 2 11 5 14 6 16 9 15 12 14 14 13 14 11 14Z"/></svg>
      <svg class="tr-ic" viewBox="0 0 16 16"><path fill="none" stroke="#fff" d="M2 5H12V15H2ZM5 1V5M9 1V5M12 8H15V12H12"/><path fill="#fff" d="M3.500 10H10.500V14H3.500Z"/></svg>
      <div class="clock clock-a"><span>11:51 AM</span><span>9/7/2021</span></div>
      <svg class="tr-note" viewBox="0 0 16 20"><path fill="#fff" d="M1 0H15V15H10L8 19 6 15H1Z"/><path stroke="#222" stroke-width="1.200" d="M4 4H12M4 7.500H12M4 11H10"/></svg>
      <i class="tr-line"></i>
    </div>
  </footer>
  <footer class="taskbar tb-b">
    <div class="tk tk-start"><svg class="tk-16" viewBox="0 0 16 16"><use href="#i-start"/></svg></div>
    <div class="tk tk-start"><svg class="tk-16" viewBox="0 0 16 16"><use href="#i-search"/></svg></div>
    <div class="tk tk-start"><svg class="tk-16" viewBox="0 0 16 16"><use href="#i-cortana"/></svg></div>
    <div class="tk tk-start"><svg class="tk-tv" viewBox="0 0 18 16"><use href="#i-taskview"/></svg></div>
    <div class="apps apps-b">
      <div class="app open stack"><svg viewBox="0 0 24 24"><use href="#i-edge"/></svg></div>
      <div class="app open stack"><svg viewBox="0 0 24 24"><use href="#i-folder"/></svg></div>
      <div class="app"><svg viewBox="0 0 24 24"><use href="#i-store"/></svg></div>
      <div class="app open"><svg viewBox="0 0 24 24"><use href="#i-circle"/></svg></div>
      <div class="app open"><svg viewBox="0 0 24 24"><use href="#i-outlook"/></svg></div>
      <div class="app open"><svg viewBox="0 0 24 24"><use href="#i-excel"/></svg></div>
      <div class="app open"><svg viewBox="0 0 24 24"><use href="#i-scan"/></svg></div>
      <div class="app open"><svg viewBox="0 0 24 24"><use href="#i-photos"/></svg></div>
      <div class="app open cur"><svg viewBox="0 0 24 24"><use href="#i-acrobat"/></svg></div>
      <div class="app open"><svg viewBox="0 0 24 24"><use href="#i-paint"/></svg></div>
    </div>
    <div class="clock clock-b"><span>11:51 AM</span><span>9/7/2021</span></div>
  </footer>
</div>
</body>
</html>
```

FILE: styles.css
```css
* { box-sizing: border-box; }
html, body { margin: 0; padding: 0; }
body { width: 3840px; height: 1080px; overflow: hidden; background: #000; font-family: "Open Sans", "Liberation Sans", sans-serif; font-size: 12px; }
svg { display: block; flex: none; }
p { margin: 0; }
i { display: block; font-style: normal; }
.defs { width: 0; height: 0; overflow: hidden; }
.screen { display: grid; grid-template-columns: 1920px 1920px; grid-template-rows: 1040px 40px; width: 3840px; height: 1080px; }

/* Acrobat */
.acro { display: flex; flex-direction: column; height: 1040px; background: #2b2b2b; color: #e6e6e6; overflow: hidden; }
.a-title { height: 23px; flex: none; background: #000; display: flex; align-items: center; padding-left: 4px; color: #eee; }
.a-title-ic { width: 11px; height: 15px; }
.a-title-text { margin-left: 8px; font-size: 12px; letter-spacing: -.2px; }
.winbtns { margin-left: auto; display: flex; gap: 31px; padding-right: 18px; }
.winbtn { width: 14px; height: 14px; }
.a-menu { height: 20px; flex: none; background: #3d3d3d; border-bottom: 1px solid #2c2c2c; display: flex; padding-left: 7px; gap: 10px; line-height: 19px; color: #e6e6e6; font-size: 12px; letter-spacing: -.2px; }
.a-menu span:nth-child(3), .a-menu span:nth-child(4) { margin-left: 2px; }
.a-menu span:nth-child(5) { margin-left: 1px; }
.a-menu span:nth-child(6) { margin-left: 3px; }
.a-tabs { height: 37px; flex: none; background: #404040; border-bottom: 1px solid #2a2a2a; display: flex; align-items: stretch; font-size: 14px; }
.a-tab-link { color: #a8a8a8; line-height: 36px; }
.a-home { margin-left: 16px; width: 72px; }
.a-tools { width: 64px; }
.a-doc-tab { width: 180px; background: #464646; border-left: 1px solid #333; border-right: 1px solid #222; display: flex; padding-left: 26px; line-height: 36px; color: #ddd; font-size: 13.500px; letter-spacing: -.4px; white-space: nowrap; }
.a-doc-tab b { margin-left: 8px; font-weight: 700; line-height: 32px; }
.a-tabs-right { margin-left: auto; display: flex; align-items: center; padding-right: 24px; }
.a-help { width: 23px; height: 23px; }
.a-help-q { font-size: 13px; fill: #c8c8c8; text-anchor: middle; font-weight: 700; }
.a-bell { width: 18px; height: 22px; margin-left: 21px; }
.a-signin { margin-left: 29px; font-size: 17px; font-weight: 600; color: #eee; letter-spacing: -.3px; }
.a-toolbar { height: 47px; flex: none; background: #4a4a4a; border-bottom: 1px solid #3a3a3a; display: flex; align-items: center; }
.tb-group { display: flex; align-items: center; }
.tb-left { padding-left: 12px; gap: 20px; }
.tb { width: 24px; height: 24px; }
.tb-nav { margin-left: 371px; }
.tb-nav > * { margin-left: 20px; }
.tb-nav > *:first-child { margin-left: 0; }
.tb-nav > .page-no { display: flex; width: 72px; height: 21px; margin-top: 7px; line-height: 16px; }
.page-cur { width: 28px; height: 21px; text-align: center; border-bottom: 1px solid #6b6b6b; }
.page-tot { margin-left: 8px; }
.tb-nav > .tb-sep { width: 1px; height: 26px; background: #3a3a3a; margin-left: 0; }
.tb-nav > .tb-sep2 { margin-left: 20px; }
.tb-nav > .tb-m19 { margin-left: 19px; }
.tb-nav > .zoom-val { display: flex; justify-content: space-between; width: 71px; height: 21px; margin-left: 21px; margin-top: 7px; padding: 0 8px; line-height: 16px; border-bottom: 1px solid #6b6b6b; }
.caret-d { width: 0; height: 0; border: 4px solid transparent; border-top: 6px solid #c8c8c8; border-bottom: 0; margin-top: 5px; }
.tb-nav > .tb-fit { width: 20px; margin-left: 21px; }
.tb-nav > .caret-fit { margin-left: 4px; margin-top: 0; }
.tb-nav > .tb-ruler { margin-left: 23px; }
.tb-right { margin-left: auto; padding-right: 16px; gap: 20px; }

.a-main { flex: 1; display: flex; min-height: 0; }
.rail { width: 18px; flex: none; background: #3f3f3f; display: flex; align-items: center; }
.tri-r { width: 0; height: 0; margin: 0 0 60px 3px; border: 4px solid transparent; border-left: 5px solid #c8c8c8; border-right: 0; }
.tri-small { margin-left: 1px; }
.dark { background: #2a2a2a; }
.dark-l { width: 468px; flex: none; }
.page { width: 700px; height: 913px; flex: none; background: #fff; overflow: hidden; }
.plan { width: 700px; height: 913px; font-family: "Liberation Sans", sans-serif; }
.plan .ln { fill: none; stroke: #000; stroke-width: 1; }
.plan .ln .ctr { stroke-dasharray: 34 6 4 6; }
.plan .ln .wfill { fill: #fff; }
.plan .blk { fill: #000; }
.plan .foot { fill: none; stroke: #000; stroke-width: 5; }
.plan .wdot { fill: #fff; }
.plan .bl { fill: none; stroke: #0000ff; stroke-width: 1; }
.plan .bl .thick { stroke-width: 2.200; }
.plan .bl .dsh { stroke-width: 1.800; stroke-dasharray: 10 4; }
.plan .bl .dot { stroke-dasharray: 1.500 1.500; }
.plan .blf { fill: #0000ff; }
.t-title { font-size: 35px; }
.t-16 { font-size: 16px; }
.t-blue { font-size: 12px; fill: #0000e8; white-space: pre; }
.t-blk { font-size: 12px; fill: #000; white-space: pre; }
.dark-r { width: 469px; flex: none; padding: 22px 0 0 24px; }
.notice { width: 420px; height: 87px; background: #323232; border-radius: 4px; padding: 11px 0 0 10px; box-shadow: 0 1px 3px rgba(0,0,0,.3); }
.notice-top { display: flex; height: 47px; }
.notice p { width: 372px; font-size: 14px; line-height: 19px; color: #eee; letter-spacing: -.1px; }
.notice-x { width: 12px; height: 15px; margin: 4px 0 0 16px; }
.notice-links { display: flex; gap: 29px; font-size: 14px; line-height: 19px; color: #c8cc8c; letter-spacing: -.1px; }
.doc-scroll { width: 17px; flex: none; background: #333; padding: 6px 0 0 4px; }
.chev-s { width: 9px; height: 7px; }
.rail-r { background: #3f3f3f; }
.panel { width: 230px; flex: none; background: #4b4b4b; display: flex; flex-direction: column; color: #ddd; }
.p-search { height: 65px; flex: none; padding: 15px 16px 0 15px; }
.p-search-box { height: 35px; width: 199px; border: 1px solid #6a6a6a; line-height: 33px; padding-left: 13px; font-size: 13px; color: #c2c2c2; letter-spacing: -.15px; }
.p-scroll { height: 693px; flex: none; display: flex; overflow: hidden; }
.p-content { width: 213px; flex: none; }
.p-head { height: 40px; display: flex; align-items: center; background: #4b4b4b; }
.p-head-ic { width: 24px; height: 26px; margin-left: 25px; }
.p-head-t { margin-left: 10px; width: 92px; font-size: 14.500px; color: #e4e4e4; letter-spacing: -.2px; white-space: nowrap; }
.chev-m { width: 12px; height: 8px; margin-left: 26px; }
.p-export { height: 408px; background: #333; padding: 24px 0 0 15px; font-size: 12.500px; color: #e8e8e8; }
.p-ex-title { display: flex; align-items: center; height: 14px; }
.p-ex-title b { font-size: 13.500px; font-weight: 700; }
.p-ex-ic { width: 17px; height: 12px; margin-left: auto; margin-right: 16px; }
.p-ex-desc { margin-top: 12px; line-height: 17px; }
.p-ex-label { margin-top: 18px; line-height: 18px; }
.p-blue { color: #53b8f0; }
.p-field { width: 183px; height: 30px; margin-top: 7px; border: 1px solid #c9c9c9; border-radius: 3px; display: flex; align-items: center; padding-left: 10px; color: #eee; white-space: nowrap; font-size: 12px; }
.p-field-x { width: 12px; height: 12px; margin-left: auto; margin-right: 7px; }
.p-conv { margin-top: 18px; }
.p-select { width: 185px; margin-top: 6px; }
.p-lang { margin-top: 16px; line-height: 17px; }
.p-lang2 { margin-top: 4px; line-height: 17px; }
.p-lang2 .p-blue { margin-left: 4px; }
.p-convert { width: 183px; height: 32px; margin-top: 50px; background: #2680eb; border-radius: 16px; text-align: center; line-height: 31px; font-size: 13.500px; color: #fff; }
.p-list { margin: 0; padding: 2px 0 0; list-style: none; height: 245px; background: #4b4b4b; overflow: hidden; }
.p-list li { height: 45.500px; display: flex; align-items: center; padding-left: 26px; font-size: 14.500px; color: #d4d4d4; }
.p-list li > svg:first-child { width: 22px; height: 20px; }
.p-list li span { margin-left: 11px; width: 104px; white-space: nowrap; }
.li-chev { width: 12px; height: 8px; margin-left: 14px; }
.p-bar { width: 17px; flex: none; background: #1a1a1a; }
.p-bar-up { width: 9px; height: 7px; margin: 5px 0 0 4px; }
.p-thumb { height: 471px; margin-top: 5px; background: #5c5c5c; }
.p-bar-down { width: 9px; height: 7px; margin: 193px 0 0 4px; }
.p-foot { flex: 1; border-top: 1px solid #3a3a3a; padding-top: 35px; text-align: center; }
.p-foot p { font-size: 12px; font-weight: 700; line-height: 15px; color: #eee; }
.p-trial { width: 150px; height: 40px; margin: 19px 0 0 40px; background: #2680eb; border-radius: 20px; line-height: 38px; font-size: 11.500px; color: #fff; }

/* Paint */
.paint { display: flex; flex-direction: column; height: 1040px; background: #fff; color: #333; overflow: hidden; }
.m-title { height: 23px; flex: none; display: flex; align-items: center; background: #fff; }
.m-app { width: 16px; height: 16px; }
.m-div { width: 1px; height: 15px; background: #aaa; margin-left: 7px; }
.m-qa { width: 15px; height: 16px; margin-left: 9px; }
.m-qa + .m-qa { margin-left: 7px; }
.m-qd { width: 7px; height: 10px; margin-left: 8px; }
.m-div2 { margin-left: 8px; }
.m-name { margin-left: 7px; color: #8c8c8c; font-size: 12px; letter-spacing: -.1px; }
.winbtns-m { gap: 31px; padding-right: 18px; }
.m-tabs { height: 24px; flex: none; display: flex; align-items: stretch; border-bottom: 1px solid #dadbdc; font-size: 12px; }
.m-file { width: 56px; background: #1979ca; color: #fff; text-align: center; line-height: 23px; }
.m-home { width: 58px; height: 24px; background: #f5f6f7; border: 1px solid #dadbdc; border-bottom: 0; text-align: center; line-height: 23px; color: #3b3b3b; }
.m-view { width: 58px; text-align: center; line-height: 23px; color: #3b3b3b; }
.m-tabs-right { margin-left: auto; display: flex; align-items: center; gap: 8px; padding-right: 3px; }
.m-up { width: 12px; height: 8px; }
.m-help { width: 16px; height: 16px; }
.m-help-q { font-size: 12px; font-weight: 700; fill: #fff; text-anchor: middle; }
.ribbon { height: 91px; flex: none; display: flex; background: #f5f6f7; border-bottom: 1px solid #dadbdc; }
.grp { flex: none; display: flex; flex-direction: column; height: 90px; position: relative; }
.grp::after { content: ""; width: 1px; position: absolute; right: 0; top: 3px; bottom: 2px; background: #e2e3e4; }
.grp-body { height: 74px; display: flex; padding-top: 4px; }
.grp-label { height: 14px; text-align: center; line-height: 14px; font-size: 11.500px; color: #676767; }
.g-clip { width: 108px; }
.g-img { width: 122px; }
.g-tools { width: 81px; }
.g-brush { width: 56px; }
.g-shapes { width: 246px; }
.g-size { width: 52px; }
.g-colors { width: 358px; }
.g-3d { width: 61px; }
.big { display: flex; flex-direction: column; align-items: center; width: 40px; line-height: 13px; font-size: 12px; color: #333; text-align: center; padding-top: 1px; }
.big-ic { width: 26px; height: 34px; margin-bottom: 2px; flex: none; }
.big > span { white-space: nowrap; }
.caret { width: 0; height: 0; margin-top: 4px; border: 3px solid transparent; border-top: 4px solid #333; border-bottom: 0; }
.caret-in { margin: 0 0 0 4px; }
.caret-g { border-top-color: #aaa; }
.b-paste { margin-left: 7px; }
.smalls { display: flex; flex-direction: column; font-size: 12px; }
.small { height: 22px; display: flex; align-items: center; gap: 3px; white-space: nowrap; color: #333; }
.small svg { width: 16px; height: 16px; }
.small.off span { color: #a2a2a2; }
.s-clip { margin-left: 4px; }
.b-select { margin-left: 3px; }
.sel-box { width: 30px; height: 24px; margin: 6px 0 6px; border: 1px dashed #1c5fa8; }
.s-img { margin-left: 7px; }
.tool-grid { display: grid; grid-template-columns: 24px 24px 24px; grid-template-rows: 28px 28px; justify-items: center; align-items: center; margin: 6px 0 0 3px; }
.tool-grid svg { width: 20px; height: 20px; }
.tool-a { font: 700 22px/28px "Liberation Serif", serif; color: #1d3a66; }
.brush-btn { width: 45px; height: 63px; margin-left: 3px; background: #c9e0f7; border: 1px solid #66a7e8; display: flex; flex-direction: column; }
.brush-top { height: 36px; border-bottom: 1px solid #66a7e8; padding: 2px 0 0 5px; }
.brush-ic { width: 32px; height: 32px; }
.brush-lab { display: flex; flex-direction: column; align-items: center; line-height: 13px; padding-top: 1px; font-size: 12px; }
.gallery { width: 157px; height: 59px; margin: 3px 0 0 4px; display: flex; background: #fff; border: 1px solid #dadbdc; }
.gal-svg { width: 140px; height: 57px; }
.shp { fill: #e8f2fa; stroke: #1f6cb0; stroke-width: 1.100; }
.gal-scroll { width: 15px; border-left: 1px solid #e6e6e6; display: flex; flex-direction: column; align-items: center; justify-content: space-around; background: #f5f6f7; }
.gs { width: 0; height: 0; border: 3px solid transparent; }
.gs-up { border-bottom: 4px solid #aaa; border-top: 0; }
.gs-dn, .gs-more { border-top: 4px solid #555; border-bottom: 0; }
.s-shapes { margin-left: 6px; }
.b-size { width: 51px; }
.size-lines { width: 32px; height: 34px; margin-top: 3px; margin-bottom: 1px; display: flex; flex-direction: column; }
.size-lines i { background: #1f3864; }
.size-lines i:nth-child(1) { height: 1px; margin-top: 1px; }
.size-lines i:nth-child(2) { height: 2px; margin-top: 4px; }
.size-lines i:nth-child(3) { height: 4px; margin-top: 5px; }
.size-lines i:nth-child(4) { height: 7px; margin-top: 5px; }
.b-size .big-ic { margin-bottom: 0; }
.color-btn { width: 42px; height: 66px; display: flex; flex-direction: column; align-items: center; text-align: center; line-height: 13px; font-size: 12px; margin-left: 4px; border: 1px solid transparent; }
.color-btn.active { background: #c9e0f7; border-color: #66a7e8; }
.color-sw { border: 1px solid #7f7f7f; padding: 1px; background: #fff; }
.color-sw i { width: 100%; height: 100%; }
.c1 { width: 32px; height: 33px; margin-top: 2px; margin-bottom: 2px; }
.c1 i { background: #000; }
.c2 { width: 24px; height: 24px; margin: 6px 0 5px; }
.c2-btn { width: 36px; margin-left: 3px; }
.palette { display: grid; grid-template-columns: repeat(10, 20px); grid-template-rows: repeat(3, 20px); gap: 2px; margin: 1px 0 0 4px; width: 218px; height: 64px; }
.palette i { border: 1px solid #a0a0a0; box-shadow: inset 0 0 0 1px #fff; }
.p0 { background: #000; } .p1 { background: #7f7f7f; } .p2 { background: #880015; } .p3 { background: #ed1c24; } .p4 { background: #ff7f27; } .p5 { background: #fff200; } .p6 { background: #22b14c; } .p7 { background: #00a2e8; } .p8 { background: #3f48cc; } .p9 { background: #a349a4; }
.q0 { background: #fff; } .q1 { background: #c3c3c3; } .q2 { background: #b97a57; } .q3 { background: #ffaec9; } .q4 { background: #ffc90e; } .q5 { background: #efe4b0; } .q6 { background: #b5e61d; } .q7 { background: #99d9ea; } .q8 { background: #7092be; } .q9 { background: #c8bfe7; }
.palette .e { background: #f5f6f7; box-shadow: none; }
.b-edit { margin-left: 1px; }
.edit-sw { width: 28px; height: 28px; margin: 3px 0 5px; border: 1px solid #a0a0a0; background: linear-gradient(180deg, rgba(255,255,255,0) 0, rgba(120,120,120,.95) 100%), linear-gradient(90deg, #f00, #ff0, #0f0, #0ff, #00f, #f0f, #f00); }
.b-3d { width: 60px; }
.b-3d .big-ic { width: 30px; height: 30px; margin: 3px 0 5px; }
.m-work { height: 876px; flex: none; display: flex; }
.m-area { flex: 1; position: relative; padding: 6px 0 0 5px; background: linear-gradient(180deg, #c6d0e1 0, #dce6f4 100%); }
.canvas { width: 656px; height: 868px; background: #fff; box-shadow: 1px 1px 2px rgba(80,100,130,.35); }
.hd { position: absolute; width: 5px; height: 5px; background: #fff; border: 1px solid #777; }
.hd-r { left: 661px; top: 438px; }
.hd-b { left: 331px; top: 873px; }
.hd-c { left: 661px; top: 873px; }
.m-bar { width: 16px; flex: none; background: #f0f0f0; display: flex; flex-direction: column; align-items: center; }
.m-bar-ch { width: 10px; height: 8px; margin: 4px 0 5px; }
.m-thumb { width: 16px; flex: 1; background: #cdcdcd; }
.m-status { height: 26px; flex: none; display: flex; background: #f0f0f0; border-top: 1px solid #d7dce3; font-size: 12px; color: #1e2b3e; }
.st { border-right: 1px solid #e2e2e2; display: flex; align-items: center; padding-left: 4px; gap: 5px; height: 25px; }
.st svg { width: 15px; height: 14px; }
.st-1 { width: 155px; }
.st-2 { width: 156px; padding-left: 11px; }
.st-3 { width: 156px; padding-left: 5px; letter-spacing: -.2px; }
.st-4 { width: 156px; }
.st-5 { width: 1098px; }
.st-zoom { flex: 1; display: flex; align-items: center; padding-left: 22px; }
.z-pct { width: 31px; color: #1e2b3e; letter-spacing: -.2px; }
.z-btn { width: 16px; height: 16px; margin-left: 4px; }
.z-track { width: 85px; height: 5px; background: #e0e0e0; border: 1px solid #d0d0d0; margin-left: 10px; display: flex; justify-content: center; align-items: center; }
.z-thumb { width: 10px; height: 17px; flex: none; background: #0078d7; clip-path: polygon(0 0, 100% 0, 100% 78%, 50% 100%, 0 78%); }
.z-plus { margin-left: 11px; }

/* Taskbars */
.taskbar { height: 40px; background: #232323; display: flex; color: #fff; overflow: hidden; }
.tk { width: 48px; flex: none; display: flex; align-items: center; justify-content: center; }
.tk-16 { width: 16px; height: 16px; }
.tk-tv { width: 18px; height: 16px; }
.tk-searchbox { width: 344px; flex: none; background: #333; border: 1px solid #5a5a5a; border-bottom: 0; display: flex; align-items: center; padding-left: 11px; color: #d4c9b8; font-size: 14px; }
.tk-s { width: 16px; height: 18px; }
.tk-searchbox span { margin-left: 12px; }
.apps { display: flex; flex: none; }
.apps-a { margin-left: 2px; }
.apps-b { margin-left: 3px; }
.app { width: 49px; height: 40px; display: flex; align-items: center; justify-content: center; position: relative; }
.app svg { width: 24px; height: 24px; }
.app.open::after { content: ""; position: absolute; left: 4px; right: 4px; bottom: 0; height: 2px; background: #76d4f5; }
.app.stack::before { content: ""; position: absolute; right: 4px; bottom: 0; width: 6px; height: 2px; background: #4b9dbc; z-index: 1; }
.app.cur { background: #4c4a49; }
.app.cur::after { left: 0; right: 0; }
.tray { margin-left: auto; display: flex; align-items: center; }
.tr-sun { width: 18px; height: 26px; }
.tr-weather { margin-left: 11px; width: 88px; font-size: 14px; letter-spacing: -.3px; white-space: nowrap; }
.tr-ic { width: 16px; height: 16px; margin-right: 8px; }
.tr-up { width: 14px; height: 10px; margin-right: 11px; }
.clock { display: flex; flex-direction: column; align-items: center; font-size: 12px; line-height: 16px; letter-spacing: -.1px; }
.clock-a { width: 68px; margin-left: 1px; padding-top: 3px; align-self: flex-start; }
.tr-note { width: 16px; height: 20px; margin-left: 10px; }
.tr-line { width: 1px; height: 40px; background: #888; margin: 0 4px 0 12px; }
.clock-b { margin-left: auto; width: 66px; padding-top: 3px; }
```
